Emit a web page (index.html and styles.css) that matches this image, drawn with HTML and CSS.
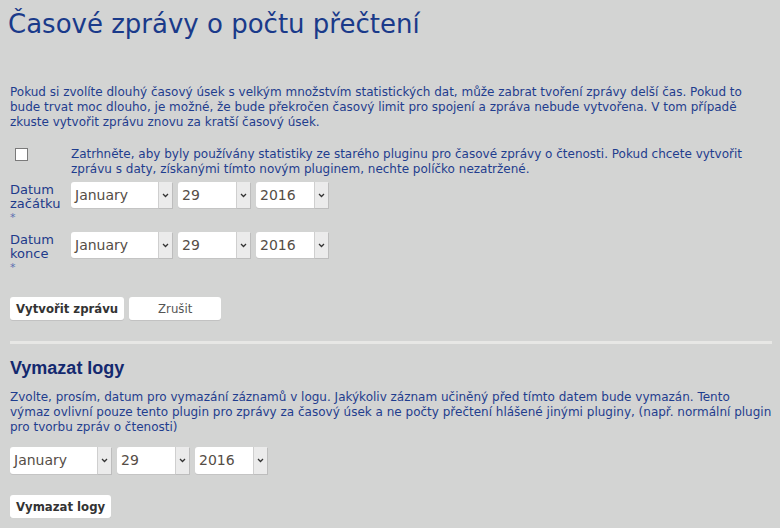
FILE: index.html
```html
<!DOCTYPE html>
<html lang="cs">
<head>
<meta charset="utf-8">
<title>Časové zprávy o počtu přečtení</title>
<link rel="stylesheet" href="styles.css">
</head>
<body>
<div class="page">
  <h1 class="title">Časové zprávy o počtu přečtení</h1>
  <p class="intro">Pokud si zvolíte dlouhý časový úsek s velkým množstvím statistických dat, může zabrat tvoření zprávy delší čas. Pokud to bude trvat moc dlouho, je možné, že bude překročen časový limit pro spojení a zpráva nebude vytvořena. V tom případě zkuste vytvořit zprávu znovu za kratší časový úsek.</p>

  <div class="row check-row">
    <div class="label-col"><span class="checkbox"></span></div>
    <div class="check-text">Zatrhněte, aby byly používány statistiky ze starého pluginu pro časové zprávy o čtenosti. Pokud chcete vytvořit zprávu s daty, získanými tímto novým pluginem, nechte políčko nezatržené.</div>
  </div>

  <div class="row date-row">
    <label class="label-col date-label">Datum začátku <span class="req">*</span></label>
    <div class="selects">
      <div class="sel sel-month"><span class="sel-val">January</span><span class="sel-arrow"><svg width="7" height="5" viewBox="0 0 7 5"><path d="M1 1 L3.5 3.5 L6 1" fill="none" stroke="#333" stroke-width="1.3"/></svg></span></div>
      <div class="sel sel-day"><span class="sel-val">29</span><span class="sel-arrow"><svg width="7" height="5" viewBox="0 0 7 5"><path d="M1 1 L3.5 3.5 L6 1" fill="none" stroke="#333" stroke-width="1.3"/></svg></span></div>
      <div class="sel sel-year"><span class="sel-val">2016</span><span class="sel-arrow"><svg width="7" height="5" viewBox="0 0 7 5"><path d="M1 1 L3.5 3.5 L6 1" fill="none" stroke="#333" stroke-width="1.3"/></svg></span></div>
    </div>
  </div>

  <div class="row date-row second">
    <label class="label-col date-label">Datum konce <span class="req">*</span></label>
    <div class="selects">
      <div class="sel sel-month"><span class="sel-val">January</span><span class="sel-arrow"><svg width="7" height="5" viewBox="0 0 7 5"><path d="M1 1 L3.5 3.5 L6 1" fill="none" stroke="#333" stroke-width="1.3"/></svg></span></div>
      <div class="sel sel-day"><span class="sel-val">29</span><span class="sel-arrow"><svg width="7" height="5" viewBox="0 0 7 5"><path d="M1 1 L3.5 3.5 L6 1" fill="none" stroke="#333" stroke-width="1.3"/></svg></span></div>
      <div class="sel sel-year"><span class="sel-val">2016</span><span class="sel-arrow"><svg width="7" height="5" viewBox="0 0 7 5"><path d="M1 1 L3.5 3.5 L6 1" fill="none" stroke="#333" stroke-width="1.3"/></svg></span></div>
    </div>
  </div>

  <div class="buttons">
    <button class="btn btn-primary">Vytvořit zprávu</button>
    <button class="btn btn-cancel">Zrušit</button>
  </div>

  <div class="divider"></div>

  <h2 class="subtitle">Vymazat logy</h2>
  <p class="intro2">Zvolte, prosím, datum pro vymazání záznamů v logu. Jakýkoliv záznam učiněný před tímto datem bude vymazán. Tento výmaz ovlivní pouze tento plugin pro zprávy za časový úsek a ne počty přečtení hlášené jinými pluginy, (např. normální plugin pro tvorbu zpráv o čtenosti)</p>

  <div class="selects selects-del">
    <div class="sel sel-month"><span class="sel-val">January</span><span class="sel-arrow"><svg width="7" height="5" viewBox="0 0 7 5"><path d="M1 1 L3.5 3.5 L6 1" fill="none" stroke="#333" stroke-width="1.3"/></svg></span></div>
    <div class="sel sel-day"><span class="sel-val">29</span><span class="sel-arrow"><svg width="7" height="5" viewBox="0 0 7 5"><path d="M1 1 L3.5 3.5 L6 1" fill="none" stroke="#333" stroke-width="1.3"/></svg></span></div>
    <div class="sel sel-year"><span class="sel-val">2016</span><span class="sel-arrow"><svg width="7" height="5" viewBox="0 0 7 5"><path d="M1 1 L3.5 3.5 L6 1" fill="none" stroke="#333" stroke-width="1.3"/></svg></span></div>
  </div>

  <div class="buttons buttons-del">
    <button class="btn btn-primary">Vymazat logy</button>
  </div>
</div>
</body>
</html>
```

FILE: styles.css
```css
html, body {
  margin: 0;
  padding: 0;
  background: #d3d4d3;
}
.page {
  padding: 8px 8px 0 10px;
  font-family: "DejaVu Sans", Verdana, sans-serif;
  font-size: 12px;
  line-height: 15px;
  color: #1f3d8e;
}
.title {
  margin: 0 0 0 -2px;
  font-size: 26px;
  line-height: 32px;
  font-weight: normal;
  color: #1a3a8a;
}
.intro {
  margin: 45px 0 0 0;
}
.row {
  display: flex;
}
.label-col {
  width: 61px;
  flex: none;
}
.check-row {
  margin-top: 17px;
}
.checkbox {
  display: block;
  width: 11px;
  height: 11px;
  margin: 1px 0 0 5px;
  background: #fff;
  border: 1px solid #7a7a7a;
}
.check-text {
  flex: 1;
}
.date-row {
  margin-top: 5px;
}
.date-row.second {
  margin-top: 7px;
}
.date-label {
  padding-top: 1px;
  font-size: 13px;
  line-height: 14px;
  color: #1d3a8a;
}
.req {
  display: block;
  font-size: 11px;
  line-height: 14px;
  color: #5a70b0;
}
.selects {
  display: flex;
  gap: 6px;
  height: 26px;
}
.sel {
  display: flex;
  background: #fff;
  border-radius: 3px 0 0 3px;
  box-shadow: 0 1px 0 #c4c4c4;
  font-size: 14px;
  color: #554d46;
}
.sel-val {
  flex: 1;
  display: flex;
  align-items: center;
  padding-left: 4px;
}
.sel-arrow {
  width: 13px;
  flex: none;
  display: flex;
  align-items: center;
  justify-content: center;
  background: #ebebeb;
  border-left: 1px solid #cfcfcf;
  box-shadow: 1px 1px 0 #bdbdbd;
}
.sel-month { width: 101px; }
.sel-day { width: 72px; }
.sel-year { width: 72px; }
.buttons {
  display: flex;
  gap: 5px;
  margin-top: 22px;
}
.btn {
  height: 23px;
  margin: 0;
  padding: 0 6px;
  background: #fff;
  border: none;
  border-radius: 3px;
  box-shadow: 0 1px 0 #c2c2c2;
  font-family: "DejaVu Sans Condensed", "DejaVu Sans", sans-serif;
  font-size: 13px;
  color: #333;
}
.btn-primary {
  font-weight: bold;
}
.btn-cancel {
  width: 92px;
  color: #555;
  font-weight: normal;
}
.divider {
  height: 3px;
  margin: 21px 0 0 0;
  background: #e7e7e5;
}
.subtitle {
  margin: 13px 0 0 0;
  font-family: "Liberation Sans", Arial, sans-serif;
  font-size: 18px;
  line-height: 22px;
  font-weight: bold;
  color: #13296f;
}
.intro2 {
  margin: 11px 0 0 0;
}
.selects-del {
  margin-top: 12px;
  height: 27px;
}
.buttons-del {
  margin-top: 21px;
}
```
